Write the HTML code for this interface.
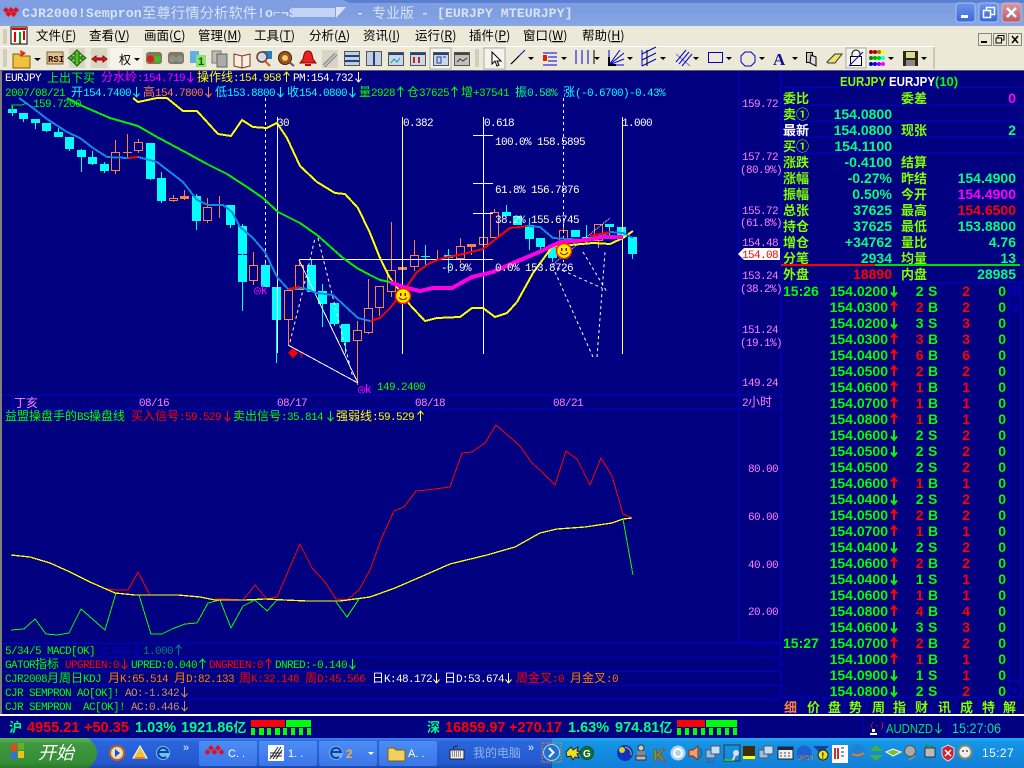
<!DOCTYPE html>
<html><head><meta charset="utf-8"><title>CJR2000</title>
<style>
html,body{margin:0;padding:0;background:#000080;width:1024px;height:768px;overflow:hidden}
svg{display:block}
text{white-space:pre}
.m{font-family:"Liberation Mono","WenQuanYi Zen Hei",monospace;font-size:11px;letter-spacing:-.6px}
.c{font-family:"WenQuanYi Zen Hei","Noto Sans CJK SC",sans-serif;font-size:12px;letter-spacing:0}
.p{font-family:"Liberation Sans",sans-serif;font-size:14px;font-weight:bold}
.l{font-family:"WenQuanYi Zen Hei","Noto Sans CJK SC",sans-serif;font-size:13px;fill:#80ff00;font-weight:bold}
.menu{font-family:"WenQuanYi Zen Hei","Noto Sans CJK SC",sans-serif;font-size:12.5px;fill:#000}
.g{fill:#00ff00}.y{fill:#ffff00}.r{fill:#ff0000}.w{fill:#fff}.cy{fill:#00ffff}.mg{fill:#ff00ff}.o{fill:#ff8040}.sg{fill:#00ff80}.pk{fill:#ff80ff}.t{fill:#c89060}
.cu rect{fill:#00ffff}.cu path{stroke:#00ffff;fill:none}
.ho rect{fill:none;stroke:#ff8040}.ho path{stroke:#ff8040;fill:none}
</style></head><body>
<svg xmlns="http://www.w3.org/2000/svg" width="1024" height="768" viewBox="0 0 1024 768">
<defs>
<linearGradient id="tb" x1="0" y1="0" x2="0" y2="1"><stop offset="0" stop-color="#7f9fe2"/><stop offset=".5" stop-color="#7d9ee0"/><stop offset="1" stop-color="#89a6e4"/></linearGradient>
<linearGradient id="btn" x1="0" y1="0" x2="0" y2="1"><stop offset="0" stop-color="#6d94ec"/><stop offset="1" stop-color="#3a68d8"/></linearGradient>
<linearGradient id="cl" x1="0" y1="0" x2="0" y2="1"><stop offset="0" stop-color="#d99aa4"/><stop offset="1" stop-color="#b85a68"/></linearGradient>
<linearGradient id="task" x1="0" y1="0" x2="0" y2="1"><stop offset="0" stop-color="#3f7ff0"/><stop offset=".12" stop-color="#2a66dc"/><stop offset=".85" stop-color="#2458cf"/><stop offset="1" stop-color="#1c46a8"/></linearGradient>
<linearGradient id="tray" x1="0" y1="0" x2="0" y2="1"><stop offset="0" stop-color="#27a8f0"/><stop offset=".15" stop-color="#1594e6"/><stop offset="1" stop-color="#1280d8"/></linearGradient>
<linearGradient id="start" x1="0" y1="0" x2="0" y2="1"><stop offset="0" stop-color="#5fb35f"/><stop offset=".2" stop-color="#3e973e"/><stop offset=".8" stop-color="#368e36"/><stop offset="1" stop-color="#2a7a2a"/></linearGradient>
<linearGradient id="tk" x1="0" y1="0" x2="0" y2="1"><stop offset="0" stop-color="#4d8cf5"/><stop offset="1" stop-color="#3a76e8"/></linearGradient>
<path id="d" d="M0 0V10M-3 6.5L0 10L3 6.5" fill="none"/>
<path id="u" d="M0 10V0M-3 3.5L0 0L3 3.5" fill="none"/>
<g id="smile"><circle r="7.5" fill="#ffee00" stroke="#ff2000" stroke-width="1.5"/><rect x="-3" y="-3" width="1.5" height="3" fill="#a00"/><rect x="1.5" y="-3" width="1.5" height="3" fill="#a00"/><path d="M-4 1.5Q0 6 4 1.5" stroke="#a00" fill="none"/></g>
</defs>

<!-- title bar -->
<rect width="1024" height="26" fill="url(#tb)"/>
<path d="M343 0H1024V3H350Z" fill="#5a80d4"/>
<g fill="#e01020"><path d="M6 7l3 3-3 3-3-3zM11 7l3 3-3 3-3-3zM16 7l3 3-3 3-3-3zM8.500 11l3 3-3 3-3-3zM13.500 11l3 3-3 3-3-3z"/></g>
<text x="22" y="17" font-family="Liberation Mono" font-weight="bold" font-size="13.300" fill="#d8e2f8">CJR2000!Sempron</text>
<text x="142" y="18" font-family="WenQuanYi Zen Hei,Noto Sans CJK SC,sans-serif" font-size="14.400" fill="#d8e2f8">至尊行情分析软件</text>
<text x="257" y="17" font-family="Liberation Mono" font-weight="bold" font-size="13.300" fill="#d8e2f8">!o⌐¬$</text>
<rect x="293" y="8" width="42" height="9" fill="#c4d4f6"/><path d="M336 7h10l-10 11z" fill="#d8e2f8"/>
<text x="356" y="17" font-family="Liberation Mono" font-weight="bold" font-size="13.300" fill="#d8e2f8">-</text>
<text x="372" y="18" font-family="WenQuanYi Zen Hei,Noto Sans CJK SC,sans-serif" font-size="14" fill="#d8e2f8">专业版</text>
<text x="421" y="17" font-family="Liberation Mono" font-weight="bold" font-size="13.300" fill="#d8e2f8">- [EURJPY MTEURJPY]</text>
<g stroke="#dfe8fb"><rect x="956" y="3" width="19" height="19" rx="3" fill="url(#btn)" stroke="#a8c0f0"/><rect x="979" y="3" width="19" height="19" rx="3" fill="url(#btn)" stroke="#a8c0f0"/><rect x="1002" y="3" width="19" height="19" rx="3" fill="url(#cl)" stroke="#d8b0c0"/></g>
<rect x="961" y="15" width="7" height="3" fill="#fff"/>
<path d="M986.500 10.500V7.500H994.500V14.500H991M983.500 10.500H990.500V17.500H983.500Z" fill="none" stroke="#fff" stroke-width="1.500"/>
<path d="M1007 8L1016 17M1016 8L1007 17" stroke="#fff" stroke-width="2.500"/>

<!-- menu bar -->
<rect y="26" width="1024" height="44" fill="#ece9d8"/>
<path d="M4 29V44M6 29V44" stroke="#b8b4a0"/>
<rect x="11" y="27" width="16" height="17" fill="#fff" stroke="#000"/><rect x="12" y="28" width="14" height="2" fill="#d00"/>
<path d="M15 32V42M20 34V44M24 31V40" stroke="#e00000" stroke-width="2"/><path d="M20 32V42" stroke="#0a0" stroke-width="2"/>
<g class="menu">
<text x="36" y="40">文件(<tspan text-decoration="underline">F</tspan>)</text>
<text x="89" y="40">查看(<tspan text-decoration="underline">V</tspan>)</text>
<text x="144" y="40">画面(<tspan text-decoration="underline">C</tspan>)</text>
<text x="198" y="40">管理(<tspan text-decoration="underline">M</tspan>)</text>
<text x="254" y="40">工具(<tspan text-decoration="underline">T</tspan>)</text>
<text x="309" y="40">分析(<tspan text-decoration="underline">A</tspan>)</text>
<text x="363" y="40">资讯(<tspan text-decoration="underline">I</tspan>)</text>
<text x="415" y="40">运行(<tspan text-decoration="underline">R</tspan>)</text>
<text x="469" y="40">插件(<tspan text-decoration="underline">P</tspan>)</text>
<text x="523" y="40">窗口(<tspan text-decoration="underline">W</tspan>)</text>
<text x="582" y="40">帮助(<tspan text-decoration="underline">H</tspan>)</text>
</g>
<g fill="#ece9d8" stroke="#8a8878"><rect x="978.500" y="33.500" width="13" height="12"/><rect x="993.500" y="33.500" width="13" height="12"/><rect x="1008.500" y="33.500" width="13" height="12"/></g>
<path d="M981 42h6" stroke="#000" stroke-width="2"/><path d="M998 37.500V35.500H1004V40H1002M996 38H1001.500V43H996Z" fill="none" stroke="#000"/><path d="M1012 36L1018 43M1018 36L1012 43" stroke="#000" stroke-width="1.500"/>

<!-- toolbar -->
<path d="M0 46.500H934" stroke="#fff"/><path d="M934 47V69" stroke="#a8a590"/>
<path d="M4 49V67M6 49V67" stroke="#b8b4a0"/>
<path d="M13 54h6l2 2h9v12H13z" fill="#f0c040" stroke="#806000"/><path d="M20 50l6 3-5 4z" fill="#e03010"/>
<path d="M34 58h7l-3.500 3z" fill="#000"/>
<rect x="47" y="52" width="16" height="12" fill="#d8c890" stroke="#806040"/><text x="48" y="62" font-family="Liberation Mono" font-size="9" font-weight="bold" fill="#400">RSI</text>
<rect x="69" y="48" width="16" height="20" fill="#d8d5c4"/><path d="M77 51l4 4h-2v3h3v-2l4 3-4 3v-2h-3v3h2l-4 4-4-4h2v-3h-3v2l-4-3 4-3v2h3v-3h-2z" transform="translate(0 -1)" fill="#50c020" stroke="#106000"/>
<rect x="91" y="48" width="16" height="20" fill="#d8d5c4"/><path d="M92 59l4-3v2h7v-2l4 3-4 3v-2h-7v2z" fill="#f02020" stroke="#800"/>
<rect x="110" y="48" width="33" height="21" fill="#f6f4ea"/><text x="119" y="64" font-family="WenQuanYi Zen Hei,Noto Sans CJK SC,sans-serif" font-size="12" fill="#000">权</text><path d="M134 58h6l-3 3z" fill="#000"/>
<rect x="146" y="52" width="16" height="12" rx="3" fill="#807860"/><circle cx="150.500" cy="59" r="3.500" fill="#e02010"/><circle cx="157.500" cy="59" r="3.500" fill="#40c020"/>
<rect x="168" y="52" width="16" height="12" rx="3" fill="#807860"/><circle cx="172.500" cy="59" r="3.500" fill="#909090"/><circle cx="179.500" cy="59" r="3.500" fill="#909090"/>
<rect x="190" y="51" width="9" height="12" fill="#60b0e8"/><rect x="196" y="55" width="10" height="12" fill="#90e070"/><text x="198" y="65" font-family="Liberation Sans" font-size="11" font-weight="bold" fill="#060">1</text>
<rect x="212" y="51" width="9" height="12" fill="#c0bcb0" stroke="#777"/><rect x="217" y="54" width="10" height="13" fill="#aaa" stroke="#666"/>
<path d="M234 54l8 2 8-2v12l-8 2-8-2zM242 56v12" fill="#f6f0e0" stroke="#803020"/>
<rect x="263" y="51" width="9" height="8" fill="#2080c0"/><circle cx="262" cy="57" r="5" fill="#c0e0f8" stroke="#803020" stroke-width="1.500"/><path d="M265 61l5 5" stroke="#c06020" stroke-width="2"/>
<circle cx="285" cy="58" r="6.500" fill="#a05020" stroke="#402010"/><circle cx="285" cy="58" r="3" fill="#f0d060"/><path d="M289 62l5 4" stroke="#555" stroke-width="2"/>
<path d="M308 51c4 0 4 4 5 8l3 4h-16l3-4c1-4 1-8 5-8z" fill="#e82020" stroke="#800"/><rect x="305" y="64" width="6" height="2" fill="#c00"/>
<rect x="322" y="50" width="16" height="18" fill="#d8d5c4"/><path d="M324 66l12-12" stroke="#888" stroke-width="4"/><path d="M324 66l12-12" stroke="#ccc" stroke-width="1.500"/>
<rect x="344.500" y="51.500" width="15" height="14" fill="#c0d0e0" stroke="#555"/><path d="M345 56h14M345 61h14" stroke="#204080" stroke-width="2"/>
<rect x="366.500" y="51.500" width="15" height="14" fill="#c0d0e0" stroke="#555"/><rect x="373" y="52" width="2" height="14" fill="#204080"/>
<rect x="388.500" y="52.500" width="15" height="13" fill="#c8d8e8" stroke="#555"/><rect x="389" y="53" width="14" height="2" fill="#204080"/><path d="M391 63l3-4 3 3 3-4" stroke="#09a" fill="none"/>
<rect x="410.500" y="52.500" width="15" height="13" fill="#c8d8e8" stroke="#555"/><rect x="411" y="53" width="14" height="2" fill="#204080"/><path d="M414 57v6M419 57v6" stroke="#d02020" stroke-width="2"/>
<rect x="430" y="48" width="21" height="21" fill="#f6f4ea" stroke="#aaa"/><rect x="433.500" y="52.500" width="15" height="13" fill="#c8d8e8" stroke="#555"/><rect x="434" y="53" width="14" height="2" fill="#204080"/><path d="M437 57h4v6h-4zM443 57h3" stroke="#2040a0" fill="none"/>
<rect x="454.500" y="52.500" width="15" height="13" fill="#c0c0b8" stroke="#555"/><rect x="455" y="53" width="14" height="2" fill="#444"/><path d="M457 62l3-3 3 2 4-3" stroke="#333" fill="none"/>
<path d="M476 49V67M478 49V67" stroke="#b8b4a0"/>
<rect x="484" y="48" width="21" height="21" fill="#f6f4ea" stroke="#aaa"/><path d="M492 52v12l3-3 2 5 2-1-2-4h4z" fill="#fff" stroke="#000"/>
<path d="M511 64L525 50" stroke="#0000d0"/><path d="M511 64L519 56" stroke="#000"/>
<g fill="#000"><path d="M528 57h6l-3 3zM561 57h6l-3 3zM594 57h6l-3 3zM627 57h6l-3 3zM660 57h6l-3 3zM693 57h6l-3 3zM726 57h6l-3 3zM759 57h6l-3 3zM792 57h6l-3 3zM888 57h6l-3 3zM921 57h6l-3 3z"/></g>
<path d="M543 53h14M548 57h9M548 61h9M543 65h14" stroke="#0000d0"/><rect x="543" y="55" width="4" height="6" fill="#e02000"/>
<path d="M576 50v14M582 50v14M588 50v14" stroke="#0000d0"/><path d="M594 50v14" stroke="#000"/>
<path d="M609 65V50M609 65H624M609 65L624 53M609 65L620 50M609 65L624 59" stroke="#0000d0" fill="none"/><path d="M609 57V65H616" stroke="#000" stroke-width="2" fill="none"/>
<path d="M642 50V66M642 60L656 53M642 66L656 59M642 54L656 47" stroke="#0000d0"/><path d="M647 50V66" stroke="#000"/>
<path d="M676 62L686 50M679 64L689 52M682 66L692 54" stroke="#0000d0"/><path d="M676 54L690 66" stroke="#0000d0" opacity=".5"/>
<rect x="708.500" y="52.500" width="14" height="10" fill="none" stroke="#0000d0"/>
<path d="M745 52h6l4 4v6l-4 4h-6l-4-4v-6z" fill="none" stroke="#0000d0"/>
<text x="773" y="65" font-family="Liberation Serif" font-weight="bold" font-size="17" fill="#101090">A</text>
<rect x="806.500" y="52.500" width="6" height="10" fill="#ccc" stroke="#000"/><path d="M811 55l5 2v9l-6-3z" fill="#ddd" stroke="#000"/>
<path d="M827 62l8-8h7l-7 9h-7z" fill="#f0e070" stroke="#333"/>
<rect x="846" y="48" width="20" height="20" fill="#f6f4ea" stroke="#aaa"/><path d="M852 56v-2a4 4 0 0 1 8 0v2" fill="none" stroke="#000"/><rect x="850.500" y="56.500" width="11" height="9" fill="none" stroke="#000"/><path d="M849 66L863 52" stroke="#0000e0"/>
<circle cx="871" cy="52" r="2" fill="#a00"/><circle cx="875" cy="52" r="2" fill="#a00"/><circle cx="879" cy="52" r="2" fill="#880"/><circle cx="883" cy="52" r="2" fill="#ff0"/><circle cx="871" cy="58" r="2" fill="#080"/><circle cx="875" cy="58" r="2" fill="#0a0"/><circle cx="879" cy="58" r="2" fill="#0c0"/><circle cx="883" cy="58" r="2" fill="#0ff"/><circle cx="871" cy="64" r="2" fill="#00a"/><circle cx="875" cy="64" r="2" fill="#00f"/><circle cx="879" cy="64" r="2" fill="#80f"/><circle cx="883" cy="64" r="2" fill="#f0f"/>
<rect x="903" y="51" width="15" height="15" fill="#2a2a10"/><rect x="906" y="52" width="9" height="6" fill="#e0d890"/><rect x="906" y="60" width="9" height="6" fill="#888"/>

<!-- chart background -->
<rect y="70" width="1024" height="645" fill="#000080"/>
<rect y="70" width="2" height="645" fill="#808080"/>
<rect y="70" width="1024" height="1" fill="#5a5a70"/>
<g stroke="#0000c8" shape-rendering="crispEdges" fill="none">
<path d="M738.500 71V642M780.500 71V697"/>
<path d="M2 395.500H780M2 409.500H780M738 642.500H780"/>
<path d="M12.500 395V409M139.500 395V409M277.500 395V409M415.500 395V409M553.500 395V409"/>
<path d="M2 643.500H780M2 657.500H780M2 671.500H780M2 685.500H780M2 699.500H780"/>
<path d="M780 87.500H1024M780 105.500H1024M780 121.500H1024M780 137.500H1024M780 153.500H1024M780 282.500H1024M780 697.500H1024"/>
<path d="M1009.500 283V697M1020.500 283V697M1009.500 305.500H1021M1009.500 680.500H1021"/>
<path d="M738 103.500H743M738 156.500H743M738 210.500H743M738 242.500H743M738 275.500H743M738 329.500H743M738 382.500H743"/>
<path d="M803 697L798 714M825 697L820 714M847 697L842 714M869 697L864 714M891 697L886 714M913 697L908 714M935 697L930 714M957 697L952 714M980 697L975 714M1002 697L997 714"/>
</g>
<circle cx="1015" cy="291" r="5.500" fill="none" stroke="#0000c8"/><path d="M1015 285V297M1009 291H1021" stroke="#0000c8"/>
<path d="M1015 307l3 5h-6z" fill="#0000c8"/><path d="M1015 694l-3-5h6z" fill="#0000c8"/>

<!-- wicks and candles cyan -->
<g class="cu" shape-rendering="crispEdges">
<path d="M12.500 105V116M23.500 119V122M35.500 119V129M46.500 131V132M58.500 128V137M69.500 149V151M81.500 149V172M92.500 151V165M104.500 162V173M150.500 179V180M161.500 172V203M196.500 194V230M230.500 225V228M242.500 224V311M265.500 262V287M276.500 320V363M311.500 260V292M322.500 284V327M334.500 303V326M345.500 342V354M425.500 245V265M448.500 249V273M506.500 205V216M529.500 218V250M540.500 247V250M552.500 245V262M586.500 225V245M609.500 224V235M632.500 254V259"/>
<path d="M421 256.500H430" />
<rect x="8" y="109" width="9" height="4"/><rect x="19" y="113" width="9" height="6"/><rect x="31" y="119" width="9" height="4"/><rect x="42" y="123" width="9" height="8"/><rect x="54" y="132" width="9" height="5"/><rect x="65" y="137" width="9" height="12"/><rect x="77" y="150" width="9" height="7"/><rect x="88" y="157" width="9" height="7"/><rect x="100" y="164" width="9" height="7"/><rect x="146" y="143" width="9" height="36"/><rect x="157" y="178" width="9" height="23"/><rect x="192" y="196" width="9" height="25"/><rect x="226" y="205" width="9" height="20"/><rect x="238" y="226" width="9" height="28"/><rect x="238" y="255" width="9" height="27"/><rect x="261" y="265" width="9" height="22"/><rect x="272" y="287" width="9" height="33"/><rect x="307" y="265" width="9" height="27"/><rect x="318" y="291" width="9" height="13"/><rect x="330" y="303" width="9" height="21"/><rect x="341" y="324" width="9" height="18"/><rect x="444" y="255" width="9" height="3"/><rect x="502" y="212" width="9" height="4"/><rect x="513" y="216" width="9" height="9"/><rect x="525" y="225" width="9" height="14"/><rect x="536" y="238" width="9" height="9"/><rect x="548" y="248" width="9" height="10"/><rect x="571" y="230" width="9" height="7"/><rect x="582" y="237" width="9" height="2"/><rect x="605" y="224" width="9" height="3"/><rect x="617" y="227" width="9" height="10"/><rect x="628" y="237" width="9" height="17"/>
</g>
<!-- hollow orange -->
<g class="ho" shape-rendering="crispEdges">
<path d="M115.500 140V152M115.500 171V174M127.500 134V159M123 152.500H132M138.500 139V142M138.500 151V153M173.500 195V198M173.500 201V202M184.500 190V200M180 197.500H189M207.500 198V207M207.500 221V223M219.500 196V218M215 205.500H224M253.500 252V265M253.500 281V285M288.500 320V345M299.500 260V265M357.500 321V330M357.500 341V385M368.500 279V308M368.500 333V334M379.500 308V316M391.500 222V270M391.500 292V297M398 268.500H407M414.500 240V255M414.500 267V271M437.500 250V260M460.500 238V246M460.500 259V263M467 245.500H476M471.500 245V255M494.500 209V212M598.500 241V248M563.500 222V230"/>
<rect x="111.500" y="152.500" width="8" height="18"/><rect x="134.500" y="142.500" width="8" height="8"/><rect x="169.500" y="198.500" width="8" height="2"/><rect x="203.500" y="207.500" width="8" height="13"/><rect x="249.500" y="265.500" width="8" height="15"/><rect x="284.500" y="290.500" width="8" height="29"/><rect x="295.500" y="265.500" width="8" height="24"/><rect x="353.500" y="330.500" width="8" height="10"/><rect x="364.500" y="308.500" width="8" height="24"/><rect x="375.500" y="286.500" width="8" height="21"/><rect x="387.500" y="270.500" width="8" height="21"/><rect x="410.500" y="255.500" width="8" height="11"/><rect x="456.500" y="246.500" width="8" height="12"/><rect x="479.500" y="237.500" width="8" height="7"/><rect x="490.500" y="212.500" width="8" height="25"/><rect x="559.500" y="230.500" width="8" height="11"/><rect x="594.500" y="224.500" width="8" height="16"/>
</g>
<rect x="398" y="267" width="9" height="3" fill="#ff8040"/><rect x="467" y="244" width="9" height="3" fill="#ff8040"/><rect x="180" y="196" width="9" height="3" fill="#ff8040"/>

<!-- vertical fib lines -->
<g shape-rendering="crispEdges" stroke="#fff" fill="none">
<path d="M277.500 117V353M402.500 117V354M483.500 117V354M622.500 117V354"/>
<path d="M265.500 98V265M563.500 98V262" stroke-dasharray="3 3"/>
<path d="M473 135.500H493M473 183.500H493M473 213.500H493M299 259.500H493"/>
<path d="M288 345L358 383M299 260L358 383"/>
</g>
<g fill="none" stroke="#fff">
<path d="M290 342L303 290L315 238M318 238L353 378M555 272L593 357M597 357L602 292L605 252M557 268L602 288M583 252L607 292" stroke-dasharray="3 3"/>
<path d="M552 265L610 218" stroke-dasharray="1 1"/>
</g>

<!-- MA lines -->
<g fill="none" shape-rendering="crispEdges">
<polyline stroke="#ffff00" stroke-width="2" points="133,98 138,102 157,98 167,98 183,111 197,111 218,134 231,136 242,120 253,127 267,128 277,123 287,138 300,166 317,182 335,193 345,194 358,208 370,233 380,258 390,278 403,295 410,305 425,321 437,318 460,317 472,308 483,308 495,317 507,313 517,302 533,273 552,247 570,245 593,243 610,244 623,238 633,231"/>
<polyline stroke="#00f000" stroke-width="2" points="67,98 80,105 110,118 138,126 157,137 187,153 207,164 227,174 247,187 263,198 278,212 300,223 317,235 343,258 357,268 370,275 380,280 390,282"/>
<polyline stroke="#1088e8" stroke-width="2" points="19,98 33,108 47,119 67,132 80,138 93,148 107,157 128,158 138,157 157,162 170,172 183,182 197,200 208,205 223,205 232,212 240,227 253,238 265,252 277,277 288,289 303,288 317,293 333,295 358,318 370,321"/>
<polyline stroke="#ff0000" stroke-width="2" points="128,158 138,157"/>
<polyline stroke="#ff0000" stroke-width="2" points="288,289 300,287"/>
<polyline stroke="#ff0000" stroke-width="2" points="370,321 380,318 390,308 403,292 417,272 430,263 443,258 463,254 483,249 497,238 510,228 527,226"/>
<polyline stroke="#1088e8" stroke-width="2" points="527,226 540,227 553,238 567,239 590,240 610,232 623,233 633,238"/>
<polyline stroke="#ff0000" stroke-width="2" points="590,236 610,232"/>
<polyline stroke="#ff00e0" stroke-width="4" points="390,282 403,287 420,291 433,288 452,288 472,277 493,272 513,263 537,253 560,242 587,240 603,237 623,237"/>
</g>
<use href="#smile" x="403" y="296"/>
<use href="#smile" x="564" y="251"/>
<path d="M293 348l5 5-5 5-5-5z" fill="#ff0000"/><text x="299" y="358" class="m r" style="font-size:9px">Y</text>
<path d="M12 112V105H22L27 103" stroke="#00e000" fill="none" shape-rendering="crispEdges"/>
<text x="33" y="107" class="m g">159.7200</text>
<text x="377" y="390" class="m g">149.2400</text>
<text x="254" y="294" class="m mg" style="font-size:12px">◎k</text>
<text x="358" y="393" class="m mg" style="font-size:12px">◎k</text>

<!-- chart labels -->
<g class="m w">
<text x="277" y="126">30</text><text x="403" y="126">0.382</text><text x="484" y="126">0.618</text><text x="622" y="126">1.000</text>
<text x="495" y="145">100.0% 158.5895</text><text x="495" y="193">61.8% 156.7876</text><text x="495" y="223">38.2% 155.6745</text><text x="495" y="271">0.0% 153.8726</text><text x="441" y="271">-0.9%</text>
</g>
<!-- header lines -->
<g class="m">
<text x="5" y="81" class="m w">EURJPY</text>
<text x="47" y="82" class="c g">上出下买</text>
<text x="101" y="81" class="m mg"><tspan class="c">分水岭</tspan>:154.719</text>
<text x="197" y="81" class="m y"><tspan class="c">操作线</tspan>:154.958</text>
<text x="293" y="81" class="m w">PM:154.732</text>
<text x="5" y="96" class="m g">2007/08/21</text>
<text x="71" y="96" class="m cy"><tspan class="c">开</tspan>154.7400</text>
<text x="143" y="96" class="m o"><tspan class="c">高</tspan>154.7800</text>
<text x="215" y="96" class="m cy"><tspan class="c">低</tspan>153.8800</text>
<text x="287" y="96" class="m cy"><tspan class="c">收</tspan>154.0800</text>
<text x="359" y="96" class="m g"><tspan class="c">量</tspan>2928</text>
<text x="407" y="96" class="m g"><tspan class="c">仓</tspan>37625</text>
<text x="461" y="96" class="m g"><tspan class="c">增</tspan>+37541</text>
<text x="515" y="96" class="m sg"><tspan class="c">振</tspan>0.58%</text>
<text x="563" y="96" class="m cy"><tspan class="c">涨</tspan>(-0.6700)-0.43%</text>
</g>
<use href="#d" x="190.500" y="72" stroke="#ff00ff"/><use href="#u" x="286.500" y="72" stroke="#ffff00"/><use href="#d" x="358.500" y="72" stroke="#fff"/>
<use href="#d" x="136.500" y="87" stroke="#00ffff"/><use href="#d" x="208.500" y="87" stroke="#ff8040"/><use href="#d" x="280.500" y="87" stroke="#00ffff"/><use href="#d" x="352.500" y="87" stroke="#00ffff"/><use href="#u" x="400.500" y="87" stroke="#00ff00"/><use href="#u" x="454.500" y="87" stroke="#00ff00"/>

<!-- axis -->
<g class="m pk">
<text x="742" y="107">159.72</text><text x="742" y="160">157.72</text><text x="740" y="173">(80.9%)</text><text x="742" y="214">155.72</text><text x="740" y="226">(61.8%)</text><text x="742" y="246">154.48</text><text x="742" y="279">153.24</text><text x="740" y="292">(38.2%)</text><text x="742" y="333">151.24</text><text x="740" y="346">(19.1%)</text><text x="742" y="386">149.24</text>
<text x="748" y="472">80.00</text><text x="748" y="520">60.00</text><text x="748" y="568">40.00</text><text x="748" y="615">20.00</text>
<text x="139" y="406">08/16</text><text x="277" y="406">08/17</text><text x="415" y="406">08/18</text><text x="553" y="406">08/21</text>
<text x="14" y="407" class="c pk">丁亥</text>
<text x="742" y="406">2<tspan class="c">小时</tspan></text>
</g>
<path d="M738 254L744 248H780V260H744Z" fill="#fff"/><text x="742" y="258" class="m r">154.08</text>

<!-- sub chart -->
<text x="5" y="420" class="c g">益盟操盘手的<tspan class="m">BS</tspan>操盘线</text>
<text x="131" y="420" class="m r"><tspan class="c">买入信号</tspan>:59.529</text>
<text x="233" y="420" class="m g"><tspan class="c">卖出信号</tspan>:35.814</text>
<text x="336" y="420" class="m y"><tspan class="c">强弱线</tspan>:59.529</text>
<use href="#d" x="227.500" y="411" stroke="#ff0000"/><use href="#d" x="330.500" y="411" stroke="#00ff00"/><use href="#u" x="420.500" y="411" stroke="#ffff00"/>
<g fill="none" shape-rendering="crispEdges">
<polyline stroke="#ff0000" points="107,589 115,590 128,590 138,572 150,595"/>
<polyline stroke="#ff0000" points="215,599 225,599 243,600 255,585 267,599 277,597 300,544 312,568 325,582 336,599 347,600 359,590 370,570 382,537 394,511 404,507 416,491 427,490 450,487 462,453 472,452 485,443 496,425 520,446 532,463 542,472 555,485 566,451 577,459 590,485 601,458 612,476 623,514 632,518"/>
<polyline stroke="#00ff00" points="11,630 24,629 35,619 46,634 57,635 69,633 81,609 105,630 116,593"/>
<polyline stroke="#00ff00" points="139,595 151,634 162,634 172,629 185,624 197,623 208,603 220,600 231,628 243,606 255,600 267,611 277,600"/>
<polyline stroke="#00ff00" points="336,602 347,617 359,599"/>
<polyline stroke="#00ff00" points="623,519 633,575"/>
<polyline stroke="#ffff00" stroke-width="1.300" points="11,555 30,557 50,563 70,572 90,582 115,593 135,595 178,595 200,597 215,600 245,600 265,599 285,600 307,601 340,601 370,597 395,588 425,575 450,564 487,555 515,547 540,533 557,529 585,527 612,523 623,519 632,518"/>
</g>

<!-- bottom indicators -->
<text x="5" y="654" class="m g">5/34/5 MACD[OK]</text><text x="100" y="654" class="m" fill="#0000d0">0.989</text><text x="143" y="654" class="m" fill="#008080">1.000</text>
<use href="#d" x="136.500" y="645" stroke="#0000d0"/><use href="#u" x="178.500" y="645" stroke="#008080"/>
<text x="5" y="668" class="m g">GATOR<tspan class="c">指标</tspan></text><text x="65" y="668" class="m r">UPGREEN:0</text><text x="131" y="668" class="m g">UPRED:0.040</text><text x="209" y="668" class="m r">DNGREEN:0</text><text x="275" y="668" class="m g">DNRED:-0.140</text>
<use href="#d" x="124.500" y="659" stroke="#ff0000"/><use href="#u" x="202.500" y="659" stroke="#00ff00"/><use href="#u" x="268.500" y="659" stroke="#ff0000"/><use href="#d" x="352.500" y="659" stroke="#00ff00"/>
<text x="5" y="682" class="m g">CJR2008<tspan class="c">月周日</tspan>KDJ</text>
<text x="108" y="682" class="m" fill="#ff8000"><tspan class="c">月</tspan>K:65.514</text><text x="174" y="682" class="m" fill="#ff8000"><tspan class="c">月</tspan>D:82.133</text>
<text x="239" y="682" class="m r"><tspan class="c">周</tspan>K:32.148</text><text x="305" y="682" class="m r"><tspan class="c">周</tspan>D:45.566</text>
<text x="372" y="682" class="m w"><tspan class="c">日</tspan>K:48.172</text><text x="444" y="682" class="m w"><tspan class="c">日</tspan>D:53.674</text>
<text x="516" y="682" class="m r"><tspan class="c">周金叉</tspan>:0</text><text x="570" y="682" class="m" fill="#ff8000"><tspan class="c">月金叉</tspan>:0</text>
<use href="#d" x="436.500" y="673" stroke="#fff"/><use href="#d" x="508.500" y="673" stroke="#fff"/>
<text x="5" y="696" class="m g">CJR SEMPRON AO[OK]!</text><text x="125" y="696" class="m t">AO:-1.342</text><use href="#d" x="184.500" y="687" stroke="#c89060"/>
<text x="5" y="710" class="m g">CJR SEMPRON  AC[OK]!</text><text x="131" y="710" class="m t">AC:0.446</text><use href="#d" x="184.500" y="701" stroke="#c89060"/>

<!-- right panel -->
<text x="840" y="86" font-family="Liberation Sans" font-size="13" font-weight="bold" fill="#80ff00" textLength="46" lengthAdjust="spacingAndGlyphs">EURJPY</text>
<text x="889" y="86" font-family="Liberation Sans" font-size="13" font-weight="bold" fill="#fff" textLength="46" lengthAdjust="spacingAndGlyphs">EURJPY</text>
<text x="935" y="86" font-family="Liberation Sans" font-size="13" font-weight="bold" fill="#00ff00">(10)</text>
<g class="l">
<text x="783" y="103">委比</text><text x="901" y="103">委差</text>
<text x="783" y="119">卖①</text>
<text x="783" y="135" style="fill:#fff">最新</text><text x="901" y="135">现张</text>
<text x="783" y="151">买①</text>
<text x="783" y="167">涨跌</text><text x="901" y="167">结算</text>
<text x="783" y="183">涨幅</text><text x="901" y="183">昨结</text>
<text x="783" y="199">振幅</text><text x="901" y="199">今开</text>
<text x="783" y="215">总张</text><text x="901" y="215">最高</text>
<text x="783" y="231">持仓</text><text x="901" y="231">最低</text>
<text x="783" y="247">增仓</text><text x="901" y="247">量比</text>
<text x="783" y="263">分笔</text><text x="901" y="263">均量</text>
<text x="783" y="279">外盘</text><text x="901" y="279">内盘</text>
</g>
<g class="p" text-anchor="end">
<text x="892" y="119" class="p sg">154.0800</text>
<text x="892" y="135" class="p sg">154.0800</text>
<text x="892" y="151" class="p sg">154.1100</text>
<text x="892" y="167" class="p sg">-0.4100</text>
<text x="892" y="183" class="p sg">-0.27%</text>
<text x="892" y="199" class="p sg">0.50%</text>
<text x="892" y="215" class="p sg">37625</text>
<text x="892" y="231" class="p sg">37625</text>
<text x="892" y="247" class="p sg">+34762</text>
<text x="892" y="263" class="p sg">2934</text>
<text x="892" y="279" class="p r">18890</text>
<text x="1016" y="103" class="p mg">0</text>
<text x="1016" y="135" class="p sg">2</text>
<text x="1016" y="183" class="p sg">154.4900</text>
<text x="1016" y="199" class="p mg">154.4900</text>
<text x="1016" y="215" class="p r">154.6500</text>
<text x="1016" y="231" class="p sg">153.8800</text>
<text x="1016" y="247" class="p sg">4.76</text>
<text x="1016" y="263" class="p sg">13</text>
<text x="1016" y="279" class="p sg">28985</text>
</g>
<rect x="781" y="264" width="94" height="2" fill="#ff0000"/><rect x="875" y="264" width="145" height="2" fill="#00e000"/>

<!-- ticks -->
<text x="783" y="296" class="p g">15:26</text><text x="783" y="648" class="p g">15:27</text>
<g class="p g" text-anchor="end">
<text x="888" y="296">154.0200</text><text x="888" y="312">154.0300</text><text x="888" y="328">154.0200</text><text x="888" y="344">154.0300</text><text x="888" y="360">154.0400</text><text x="888" y="376">154.0500</text><text x="888" y="392">154.0600</text><text x="888" y="408">154.0700</text><text x="888" y="424">154.0800</text><text x="888" y="440">154.0600</text><text x="888" y="456">154.0500</text><text x="888" y="472">154.0500</text><text x="888" y="488">154.0600</text><text x="888" y="504">154.0400</text><text x="888" y="520">154.0500</text><text x="888" y="536">154.0700</text><text x="888" y="552">154.0400</text><text x="888" y="568">154.0600</text><text x="888" y="584">154.0400</text><text x="888" y="600">154.0600</text><text x="888" y="616">154.0800</text><text x="888" y="632">154.0600</text><text x="888" y="648">154.0700</text><text x="888" y="664">154.1000</text><text x="888" y="680">154.0900</text><text x="888" y="696">154.0800</text>
</g>
<g stroke="#00ff00" stroke-width="2"><use href="#d" x="894" y="286"/><use href="#d" x="894" y="318"/><use href="#d" x="894" y="430"/><use href="#d" x="894" y="446"/><use href="#d" x="894" y="494"/><use href="#d" x="894" y="542"/><use href="#d" x="894" y="574"/><use href="#d" x="894" y="622"/><use href="#d" x="894" y="670"/><use href="#d" x="894" y="686"/></g>
<g stroke="#ff0000" stroke-width="2"><use href="#u" x="894" y="302"/><use href="#u" x="894" y="334"/><use href="#u" x="894" y="350"/><use href="#u" x="894" y="366"/><use href="#u" x="894" y="382"/><use href="#u" x="894" y="398"/><use href="#u" x="894" y="414"/><use href="#u" x="894" y="478"/><use href="#u" x="894" y="510"/><use href="#u" x="894" y="526"/><use href="#u" x="894" y="558"/><use href="#u" x="894" y="590"/><use href="#u" x="894" y="606"/><use href="#u" x="894" y="638"/><use href="#u" x="894" y="654"/></g>
<g class="p" text-anchor="end">
<g class="g"><text x="923.500" y="296">2</text><text x="923.500" y="328">3</text><text x="923.500" y="440">2</text><text x="923.500" y="456">2</text><text x="923.500" y="472">2</text><text x="923.500" y="504">2</text><text x="923.500" y="552">2</text><text x="923.500" y="584">1</text><text x="923.500" y="632">3</text><text x="923.500" y="680">1</text><text x="923.500" y="696">2</text></g>
<g class="r"><text x="923.500" y="312">2</text><text x="923.500" y="344">3</text><text x="923.500" y="360">6</text><text x="923.500" y="376">2</text><text x="923.500" y="392">1</text><text x="923.500" y="408">1</text><text x="923.500" y="424">1</text><text x="923.500" y="488">1</text><text x="923.500" y="520">2</text><text x="923.500" y="536">1</text><text x="923.500" y="568">2</text><text x="923.500" y="600">1</text><text x="923.500" y="616">4</text><text x="923.500" y="648">2</text><text x="923.500" y="664">1</text></g>
</g>
<g class="p g">
<text x="928" y="296">S</text><text x="928" y="312">B</text><text x="928" y="328">S</text><text x="928" y="344">B</text><text x="928" y="360">B</text><text x="928" y="376">B</text><text x="928" y="392">B</text><text x="928" y="408">B</text><text x="928" y="424">B</text><text x="928" y="440">S</text><text x="928" y="456">S</text><text x="928" y="472">S</text><text x="928" y="488">B</text><text x="928" y="504">S</text><text x="928" y="520">B</text><text x="928" y="536">B</text><text x="928" y="552">S</text><text x="928" y="568">B</text><text x="928" y="584">S</text><text x="928" y="600">B</text><text x="928" y="616">B</text><text x="928" y="632">S</text><text x="928" y="648">B</text><text x="928" y="664">B</text><text x="928" y="680">S</text><text x="928" y="696">S</text>
</g>
<g class="p r" text-anchor="end">
<text x="970" y="296">2</text><text x="970" y="312">2</text><text x="970" y="328">3</text><text x="970" y="344">3</text><text x="970" y="360">6</text><text x="970" y="376">2</text><text x="970" y="392">1</text><text x="970" y="408">1</text><text x="970" y="424">1</text><text x="970" y="440">2</text><text x="970" y="456">2</text><text x="970" y="472">2</text><text x="970" y="488">1</text><text x="970" y="504">2</text><text x="970" y="520">2</text><text x="970" y="536">1</text><text x="970" y="552">2</text><text x="970" y="568">2</text><text x="970" y="584">1</text><text x="970" y="600">1</text><text x="970" y="616">4</text><text x="970" y="632">3</text><text x="970" y="648">2</text><text x="970" y="664">1</text><text x="970" y="680">1</text><text x="970" y="696">2</text>
</g>
<g class="p g" text-anchor="end">
<text x="1006" y="296">0</text><text x="1006" y="312">0</text><text x="1006" y="328">0</text><text x="1006" y="344">0</text><text x="1006" y="360">0</text><text x="1006" y="376">0</text><text x="1006" y="392">0</text><text x="1006" y="408">0</text><text x="1006" y="424">0</text><text x="1006" y="440">0</text><text x="1006" y="456">0</text><text x="1006" y="472">0</text><text x="1006" y="488">0</text><text x="1006" y="504">0</text><text x="1006" y="520">0</text><text x="1006" y="536">0</text><text x="1006" y="552">0</text><text x="1006" y="568">0</text><text x="1006" y="584">0</text><text x="1006" y="600">0</text><text x="1006" y="616">0</text><text x="1006" y="632">0</text><text x="1006" y="648">0</text><text x="1006" y="664">0</text><text x="1006" y="680">0</text><text x="1006" y="696">0</text>
</g>
<!-- tabs -->
<g class="l"><text x="784" y="712" style="fill:#ff8040">细</text><text x="807" y="712">价</text><text x="828" y="712">盘</text><text x="849" y="712">势</text><text x="872" y="712">周</text><text x="893" y="712">指</text><text x="915" y="712">财</text><text x="938" y="712">讯</text><text x="960" y="712">成</text><text x="982" y="712">特</text><text x="1003" y="712">解</text></g>

<!-- status bar -->
<rect y="714" width="1024" height="2" fill="#fff"/>
<rect y="716" width="1024" height="22" fill="#000080"/>
<text x="9" y="732" class="l" style="fill:#00ff80">沪</text>
<g class="p" style="font-size:14.500px">
<text x="27" y="732" class="r" style="font-size:14.500px">4955.21</text><text x="84" y="732" class="r" style="font-size:14.500px">+50.35</text><text x="135" y="732" class="sg" style="font-size:14.500px">1.03%</text><text x="181" y="732" class="sg" style="font-size:14.500px">1921.86<tspan font-family="WenQuanYi Zen Hei,Noto Sans CJK SC,sans-serif" font-size="13">亿</tspan></text>
<text x="445" y="732" class="r" style="font-size:14.500px">16859.97</text><text x="509" y="732" class="r" style="font-size:14.500px">+270.17</text><text x="568" y="732" class="sg" style="font-size:14.500px">1.63%</text><text x="615" y="732" class="sg" style="font-size:14.500px">974.81<tspan font-family="WenQuanYi Zen Hei,Noto Sans CJK SC,sans-serif" font-size="13">亿</tspan></text>
</g>
<text x="427" y="732" class="l" style="fill:#00ff80">深</text>
<rect x="251" y="720" width="34" height="7" fill="#ff0000"/><rect x="286" y="720" width="25" height="7" fill="#00ff00"/>
<g fill="#00ff00"><rect x="251" y="728" width="4" height="7"/><rect x="259" y="728" width="5" height="7"/><rect x="267" y="728" width="4" height="7"/><rect x="275" y="728" width="5" height="7"/><rect x="283" y="728" width="4" height="7"/><rect x="291" y="728" width="4" height="7"/><rect x="299" y="728" width="4" height="7"/><rect x="307" y="728" width="4" height="7"/></g>
<rect x="677" y="720" width="28" height="7" fill="#ff0000"/><rect x="706" y="720" width="31" height="7" fill="#00ff00"/>
<g fill="#00ff00"><rect x="677" y="728" width="4" height="7"/><rect x="685" y="728" width="4" height="7"/><rect x="693" y="728" width="4" height="7"/><rect x="701" y="728" width="4" height="7"/><rect x="709" y="728" width="4" height="7"/><rect x="717" y="728" width="4" height="7"/><rect x="725" y="728" width="4" height="7"/><rect x="733" y="728" width="4" height="7"/></g>
<path d="M741.500 716V737M862.500 716V737M884.500 716V737M950.500 716V737" stroke="#0000c8" shape-rendering="crispEdges"/>
<text x="870" y="728" font-family="Liberation Mono" font-size="8" fill="#f02020">(·)</text><path d="M872 729h3v3h-3zM870 733h7v2h-7z" fill="#fff"/>
<text x="886" y="733" font-family="Liberation Sans" font-size="13" fill="#00e060" textLength="47" lengthAdjust="spacingAndGlyphs">AUDNZD</text><use href="#d" x="938.500" y="723" stroke="#00e060"/>
<text x="952" y="733" font-family="Liberation Sans" font-size="14" fill="#00e0a0" textLength="49" lengthAdjust="spacingAndGlyphs">15:27:06</text>

<!-- taskbar -->
<rect y="738" width="1024" height="30" fill="url(#task)"/>
<path d="M0 738H88Q97 745 97 753Q97 762 88 768H0Z" fill="url(#start)"/>
<rect x="11" y="744" width="6" height="7" fill="#e84820"/><rect x="18" y="743" width="6" height="7" fill="#60b030"/><rect x="11" y="752" width="6" height="7" fill="#3070e0"/><rect x="18" y="751" width="6" height="7" fill="#f0c020"/>
<text x="38" y="759" font-family="WenQuanYi Zen Hei,Noto Sans CJK SC,sans-serif" font-size="18" font-style="italic" fill="#fff">开始</text>
<circle cx="117" cy="753" r="7" fill="#e8e0c0" stroke="#c06020" stroke-width="2"/><path d="M115 749l5 4-5 4z" fill="#2050c0"/>
<path d="M140 746l7 12h-14z" fill="#f0c040" stroke="#fff"/><path d="M135 758h10" stroke="#e08020" stroke-width="2"/>
<circle cx="163" cy="753" r="7" fill="#70c0f0"/><path d="M158 752h10a5 5 0 1 0-2 5" fill="none" stroke="#1040a0" stroke-width="2"/>
<text x="183" y="751" font-family="Liberation Sans" font-size="11" font-weight="bold" fill="#bcd4fa">»</text>
<g fill="url(#tk)"><rect x="199" y="741" width="58" height="25" rx="2"/><rect x="259" y="741" width="58" height="25" rx="2"/><rect x="319" y="741" width="58" height="25" rx="2"/><rect x="379" y="741" width="58" height="25" rx="2"/></g>
<g fill="#e01020"><path d="M211 745l3 3-3 3-3-3zM218 745l3 3-3 3-3-3zM214.500 749l3 3-3 3-3-3zM221.500 749l3 3-3 3-3-3zM207.500 749l3 3-3 3-3-3z"/></g>
<text x="228" y="757" font-family="Liberation Sans" font-size="11" fill="#fff">C. .</text>
<rect x="268" y="745" width="16" height="16" fill="#fff"/><path d="M270 759l8-12M273 759l8-12M276 759l6-9M270 753h12M270 756h12" stroke="#222" fill="none"/>
<text x="288" y="757" font-family="Liberation Sans" font-size="11" fill="#fff">1. .</text>
<circle cx="336" cy="753" r="7" fill="#70b0f0"/><path d="M331 752h10a5 5 0 1 0-2 5" fill="none" stroke="#1040a0" stroke-width="2"/>
<text x="346" y="758" font-family="Liberation Sans" font-size="12" font-weight="bold" fill="#f0b040">2</text>
<path d="M368 752h6l-3 3z" fill="#fff"/>
<path d="M388 748h6l2 2h9v11h-17z" fill="#f0d060" stroke="#806000"/>
<text x="408" y="757" font-family="Liberation Sans" font-size="11" fill="#fff">A. .</text>
<rect x="450" y="750" width="14" height="9" fill="#eee" stroke="#222"/><path d="M452 752h10M452 754h10M452 756h10" stroke="#333" stroke-dasharray="1 1"/>
<path d="M453 749q0-3 5-3" stroke="#222" fill="none"/>
<text x="473" y="757" font-family="WenQuanYi Zen Hei,Noto Sans CJK SC,sans-serif" font-size="12" fill="#90b4e8">我的电脑</text>
<text x="528" y="751" font-family="Liberation Sans" font-size="11" font-weight="bold" fill="#bcd4fa">»</text>
<rect x="552" y="738" width="472" height="30" fill="url(#tray)"/>
<rect x="542" y="743" width="19" height="19" fill="none" stroke="#e08020" stroke-dasharray="2 1"/><circle cx="551.500" cy="752.500" r="8" fill="#2070d0" stroke="#bcd"/><path d="M549 748l4.500 4.500-4.500 4.500" stroke="#fff" stroke-width="2" fill="none"/>
<path d="M566 752l5-5 2 3 5-3-1 4 4 1-4 2 2 4-4-1-2 3-2-4-4 1z" fill="#f0e020" stroke="#222"/>
<circle cx="587" cy="753" r="6.500" fill="#107030" stroke="#053"/><text x="583" y="757" font-family="Liberation Sans" font-size="10" font-weight="bold" fill="#fff">G</text>
<circle cx="625" cy="753" r="8" fill="#1030c0"/><circle cx="622" cy="750" r="3" fill="#e0d020"/><path d="M625 747a7 7 0 0 1 6 8" stroke="#e0c020" fill="none"/>
<circle cx="641" cy="748" r="3" fill="#ccc" stroke="#333"/><rect x="637" y="751" width="8" height="5" fill="#888"/><rect x="636" y="756" width="10" height="4" fill="#bbb" stroke="#333"/>
<text x="653" y="761" font-family="Liberation Sans" font-size="17" font-weight="bold" fill="#20d020" stroke="#e02020" stroke-width=".8">K</text>
<circle cx="678" cy="753" r="7.500" fill="#b0d4f0"/><circle cx="678" cy="753" r="4" fill="none" stroke="#fff" stroke-width="2"/>
<path d="M689 750h4l5-4v14l-5-4h-4z" fill="#f0a060" stroke="#803010"/><path d="M700 748q3 5 0 10" stroke="#444" fill="none"/>
<rect x="706" y="750" width="9" height="8" fill="#90c0f0" stroke="#555"/><rect x="711" y="746" width="9" height="8" fill="#c0e0ff" stroke="#555"/><path d="M708 758v4h6" stroke="#555" fill="none"/>
<rect x="724" y="745" width="16" height="16" fill="none" stroke="#333"/><path d="M724 760h10" stroke="#30c030" stroke-width="2"/><circle cx="736" cy="753" r="3" fill="#ddd"/><path d="M735 755l-2 5" stroke="#ddd" stroke-width="2"/>
<rect x="743" y="746" width="12" height="10" fill="#403000"/><rect x="743" y="756" width="12" height="3" fill="#ffff00"/>
<rect x="759" y="750" width="9" height="8" fill="#90c0f0" stroke="#555"/><rect x="764" y="746" width="9" height="8" fill="#c0e0ff" stroke="#555"/>
<rect x="778" y="747" width="15" height="12" fill="#eee" stroke="#222"/><rect x="778" y="747" width="15" height="3" fill="#224"/><path d="M780 753h2M784 753h2M788 753h2M780 756h2M784 756h2M788 756h2" stroke="#446"/>
<circle cx="804" cy="753" r="7.500" fill="#2060d0"/><text x="798" y="760" font-family="Liberation Sans" font-size="7" fill="#fff" stroke="#000" stroke-width=".2">3859</text>
<path d="M813 746h16l-8 8z" fill="#1040a0"/><circle cx="823" cy="755" r="5" fill="#f0e020" stroke="#222"/><text x="821.500" y="758.500" font-family="Liberation Sans" font-size="8" font-weight="bold" fill="#000">!</text>
<rect x="832" y="745" width="16" height="18" fill="#fff"/><path d="M835 748v11M838 748v11" stroke="#d03020" stroke-width="2"/><path d="M841 748h3M841 752h3M841 756h3" stroke="#203090"/>
<circle cx="858" cy="752" r="7.500" fill="#2080d8"/><path d="M852 754q6 3 12-1" stroke="#e08020" stroke-width="2" fill="none"/>
<path d="M876 745l7 6h-14zM876 761l7-6h-14z" fill="#40b040"/>
<path d="M886 752l7-3 8 3-8 4z" fill="#80c020" stroke="#fff"/>
<circle cx="910" cy="751" r="5.500" fill="#aaa" stroke="#555"/><path d="M915 756l-6 4" stroke="#888" stroke-width="2"/>
<rect x="925" y="748" width="10" height="9" fill="#bbb" stroke="#333"/><path d="M926 745l3 3 3-2" stroke="#2a8a2a" stroke-width="2" fill="none"/>
<path d="M948 745l6 3v6q0 4-6 7-6-3-6-7v-6z" fill="#d02030" stroke="#ddd"/><path d="M945 750l6 6M951 750l-6 6" stroke="#fff" stroke-width="1.500"/>
<circle cx="965" cy="752" r="6.500" fill="#eee" stroke="#886" stroke-width="2"/><circle cx="963" cy="751" r=".9" fill="#222"/><circle cx="967" cy="751" r=".9" fill="#222"/>
<text x="982" y="757" font-family="Liberation Sans" font-size="12" letter-spacing=".4" fill="#fff">15:27</text>
</svg>
</body></html>
